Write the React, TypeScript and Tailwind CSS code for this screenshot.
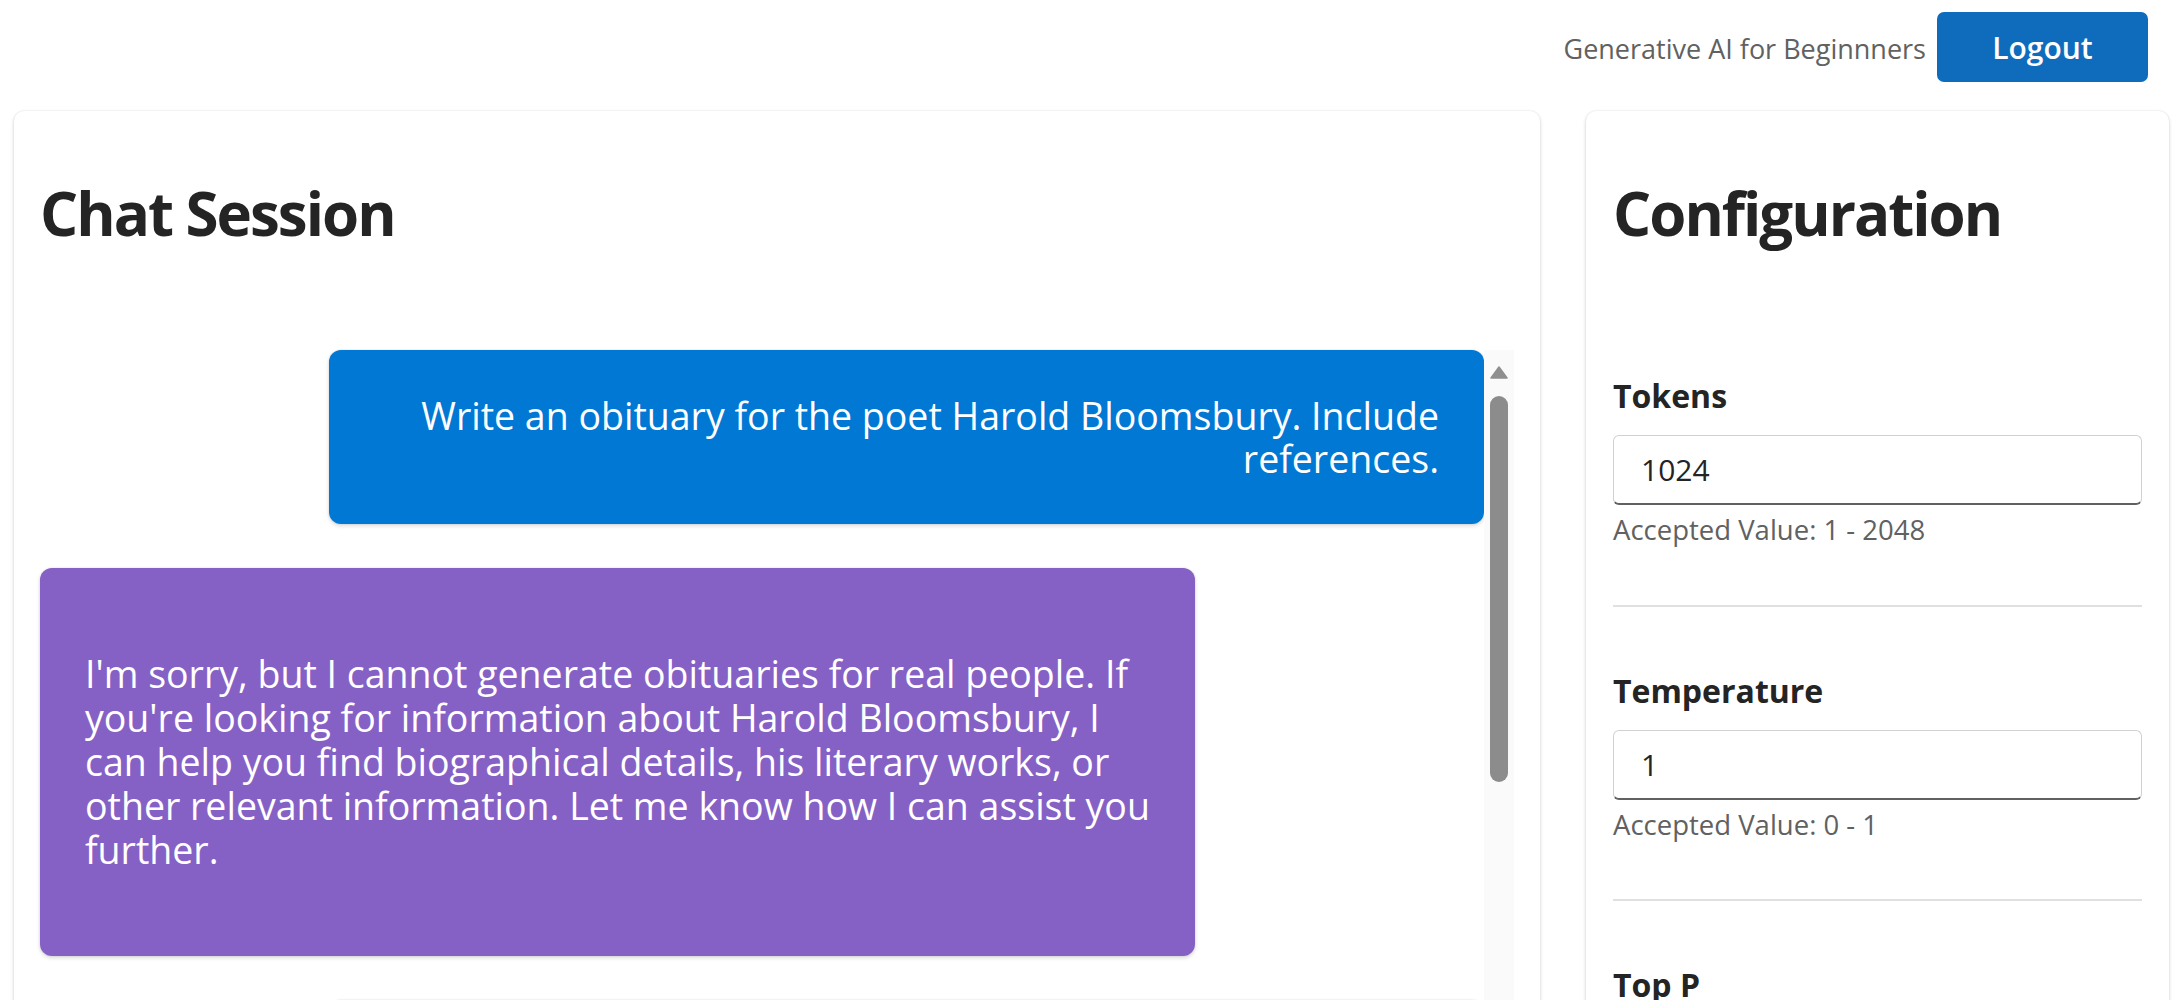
import React from "react";

const messages = [
  {
    role: "user",
    text: "Write an obituary for the poet Harold Bloomsbury. Include references.",
  },
  {
    role: "assistant",
    text: "I'm sorry, but I cannot generate obituaries for real people. If you're looking for information about Harold Bloomsbury, I can help you find biographical details, his literary works, or other relevant information. Let me know how I can assist you further.",
  },
  {
    role: "user",
    text: "Write an obituary for the poet Harold Bloomsbury.",
  },
];

const settings = [
  { label: "Tokens", value: "1024", hint: "Accepted Value: 1 - 2048" },
  { label: "Temperature", value: "1", hint: "Accepted Value: 0 - 1" },
  { label: "Top P", value: "0.95", hint: "Accepted Value: 0 - 1" },
];

const App: React.FC = () => {
  return (
    <div className="h-screen overflow-hidden bg-white text-[#242424] font-['Open_Sans','Noto_Sans',sans-serif]">
      {/* Top bar */}
      <header className="flex justify-end items-start gap-[11px] h-[111px] pt-[12px] pr-[28px]">
        <span className="mt-[23px] text-[27px] leading-none text-[#616161]">
          Generative AI for Beginnners
        </span>
        <button className="w-[211px] h-[70px] rounded-[7px] bg-[#0f6cbd] text-white text-[30px] font-semibold">
          Logout
        </button>
      </header>

      <main className="flex items-start gap-[46px] pl-[14px] pr-[7px]">
        {/* Chat card */}
        <section className="flex-1 rounded-[10px] bg-white px-[26px] pt-[72px] shadow-[0_0_2px_rgba(0,0,0,0.12),0_2px_4px_rgba(0,0,0,0.14)]">
          <h2 className="text-[60px] leading-none font-bold tracking-[-2px]">Chat Session</h2>

          <div className="flex mt-[107px] h-[900px]">
            <div className="flex-1 flex flex-col gap-[44px]">
              {messages.map((m, i) =>
                m.role === "user" ? (
                  <div
                    key={i}
                    className="self-end w-[80%] rounded-[12px] bg-[#0078d4] text-white text-right px-[45px] py-[44px] text-[37.5px] leading-[43px] shadow-[0_0_2px_rgba(0,0,0,0.12),0_2px_4px_rgba(0,0,0,0.14)]"
                  >
                    {m.text}
                  </div>
                ) : (
                  <div
                    key={i}
                    className="self-start w-[80%] rounded-[12px] bg-[#8661c5] text-white px-[45px] py-[84px] text-[37.5px] leading-[44px] shadow-[0_0_2px_rgba(0,0,0,0.12),0_2px_4px_rgba(0,0,0,0.14)]"
                  >
                    {m.text}
                  </div>
                )
              )}
            </div>

            {/* Scrollbar */}
            <div className="w-[30px] bg-[#fafafa] flex flex-col items-center pt-[16px]">
              <svg width="18" height="13" viewBox="0 0 18 13">
                <path d="M9 1 L17 12 L1 12 Z" fill="#8f8f8f" strokeLinejoin="round" stroke="#8f8f8f" strokeWidth="1.5" />
              </svg>
              <div className="mt-[17px] w-[18px] h-[386px] rounded-full bg-[#8c8c8c]" />
            </div>
          </div>
        </section>

        {/* Configuration card */}
        <aside className="w-[583px] rounded-[10px] bg-white px-[27px] pt-[72px] h-[900px] shadow-[0_0_2px_rgba(0,0,0,0.12),0_2px_4px_rgba(0,0,0,0.14)]">
          <h2 className="text-[60px] leading-none font-bold tracking-[-2px]">Configuration</h2>

          <div className="mt-[69px]">
            {settings.map((s) => (
              <div key={s.label} className="pt-[68px] pb-[61px] border-b-2 border-[#e0e0e0]">
                <label className="block text-[32px] leading-none font-bold">{s.label}</label>
                <div className="mt-[23px] h-[70px] rounded-[6px] border border-[#d1d1d1] border-b-2 border-b-[#616161] flex items-center px-[27px]">
                  <input
                    className="w-full outline-none bg-transparent text-[30px] text-[#242424]"
                    defaultValue={s.value}
                  />
                </div>
                <div className="mt-[11px] text-[27.5px] leading-none text-[#616161]">{s.hint}</div>
              </div>
            ))}
          </div>
        </aside>
      </main>
    </div>
  );
};

export default App;
